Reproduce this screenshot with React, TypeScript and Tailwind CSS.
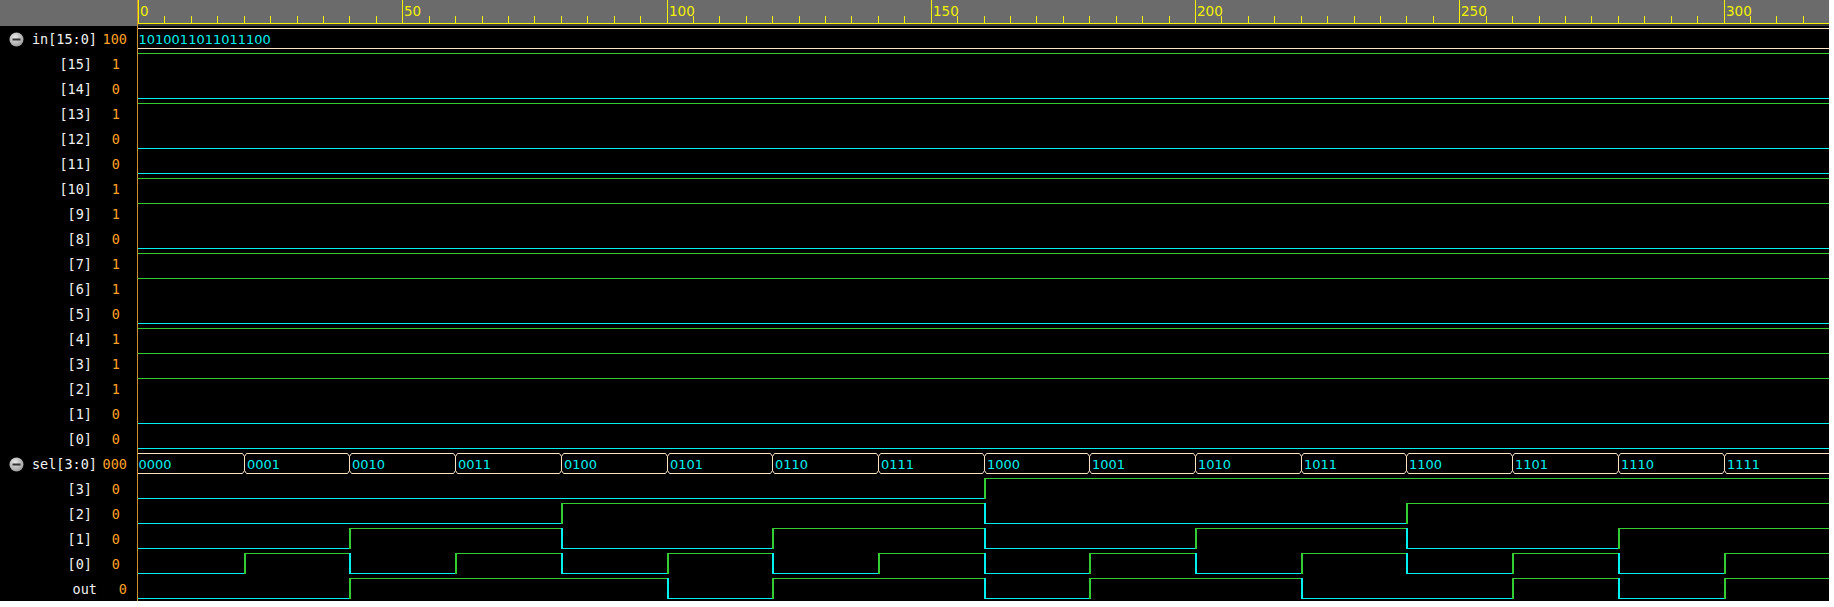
import React from "react";

const T = 5.285;
const W = 1691;
const H = 601;
const GREEN = "#33cc33";
const CYAN = "#00f0f0";
const BUS = "#ffe4c4";
const YELLOW = "#f2f200";
const inBits = "1010011011011100";

type Row = { label: string; value: string; top?: boolean; icon?: boolean };

const rows: Row[] = [
  { label: "in[15:0]", value: "100", top: true, icon: true },
  ...Array.from({ length: 16 }, (_, i) => ({ label: `[${15 - i}]`, value: inBits[i] })),
  { label: "sel[3:0]", value: "000", top: true, icon: true },
  ...[3, 2, 1, 0].map((b) => ({ label: `[${b}]`, value: "0" })),
  { label: "out", value: "0", top: true },
];

const xr = (t: number) => t * T + 1;

const MinusIcon = () => (
  <svg width="15" height="15" viewBox="0 0 15 15" className="shrink-0">
    <defs>
      <radialGradient id="g" cx="40%" cy="35%" r="70%">
        <stop offset="0%" stopColor="#e8e8e8" />
        <stop offset="100%" stopColor="#9a9a9a" />
      </radialGradient>
    </defs>
    <circle cx="7.5" cy="7.5" r="7" fill="url(#g)" />
    <rect x="3.5" y="6.5" width="8" height="2" fill="#333" />
  </svg>
);

const digital = (k: number, levels: number[]) => {
  const hi = 28 + 25 * k + 0.5;
  const lo = 48 + 25 * k + 0.5;
  const out: React.ReactNode[] = [];
  levels.forEach((lv, i) => {
    const x0 = i === 0 ? 0 : xr(20 * i);
    const x1 = i === levels.length - 1 ? W : xr(20 * (i + 1));
    out.push(
      <line key={`h${k}-${i}`} x1={x0} x2={x1} y1={lv ? hi : lo} y2={lv ? hi : lo} stroke={lv ? GREEN : CYAN} strokeWidth={1} />
    );
    if (i > 0 && levels[i - 1] !== lv) {
      out.push(
        <line key={`v${k}-${i}`} x1={x0} x2={x0} y1={hi - 0.5} y2={lo + 0.5} stroke={lv ? GREEN : CYAN} strokeWidth={2} />
      );
    }
  });
  return out;
};

const bus = (k: number, values: string[]) => {
  const top = 28 + 25 * k + 0.5;
  const bot = 48 + 25 * k + 0.5;
  return values.map((v, i) => {
    const x0 = i === 0 ? 0 : Math.round(20 * i * T) + 0.5;
    const x1 = i === values.length - 1 ? W : Math.round(20 * (i + 1) * T) + 0.5;
    const l = i === 0 ? `M${x0},${top} ` : `M${x0 + 2},${top} `;
    const d =
      l +
      (i === values.length - 1
        ? `L${x1},${top} M${x1},${bot} `
        : `L${x1 - 2},${top} L${x1},${top + 3} L${x1},${bot - 3} L${x1 - 2},${bot} `) +
      (i === 0 ? `L${x0},${bot}` : `L${x0 + 2},${bot} L${x0},${bot - 3} L${x0},${top + 3} L${x0 + 2},${top}`);
    return (
      <g key={`b${k}-${i}`}>
        <path d={d} fill="none" stroke={BUS} strokeWidth={1} />
        <text x={i === 0 ? x0 + 0.5 : x0 + 2.5} y={top + 15} fill={CYAN} fontSize="13" fontFamily="'DejaVu Sans', sans-serif">
          {v}
        </text>
      </g>
    );
  });
};

const Waves = () => {
  const ticks: React.ReactNode[] = [];
  for (let t = 0; t <= 320; t += 5) {
    const x = Math.round(t * T) + 0.5;
    const major = t % 50 === 0;
    ticks.push(<line key={`t${t}`} x1={x} x2={x} y1={major ? 0 : 16} y2={23} stroke={YELLOW} strokeWidth={1} />);
    if (major)
      ticks.push(
        <text key={`l${t}`} x={x + 1.5} y={15.5} fill={YELLOW} fontSize="13.5" fontFamily="'DejaVu Sans', sans-serif">
          {t}
        </text>
      );
  }

  const selVals = Array.from({ length: 16 }, (_, i) => i.toString(2).padStart(4, "0"));
  const steps = Array.from({ length: 16 }, (_, i) => i);

  return (
    <svg width={W} height={H} className="block" shapeRendering="crispEdges">
      <rect x={0} y={0} width={W} height={23} fill="#6b6b6b" />
      <rect x={0} y={24} width={W} height={2} fill="#3a3a3a" />
      <line x1={0} x2={W} y1={23.5} y2={23.5} stroke={YELLOW} />
      <g shapeRendering="auto">{ticks}</g>
      {bus(0, [inBits])}
      {Array.from({ length: 16 }, (_, i) => digital(i + 1, [Number(inBits[i])]))}
      <g shapeRendering="auto">{bus(17, selVals)}</g>
      {[3, 2, 1, 0].map((b, j) => digital(18 + j, steps.map((s) => (s >> b) & 1)))}
      {digital(22, steps.map((s) => Number(inBits[15 - s])))}
    </svg>
  );
};

export default function App() {
  return (
    <div className="w-[1834px] h-[607px] bg-white overflow-hidden">
      <div className="flex w-[1829px] h-[601px] bg-black overflow-hidden">
        <div className="w-[138px] shrink-0 border-r border-[#cf922f] flex flex-col font-['DejaVu_Sans_Mono',monospace] text-[13.5px]">
          <div className="h-[26px] shrink-0 bg-[#6b6b6b]" />
          {rows.map((r, i) => (
            <div key={i} className="h-[25px] shrink-0 flex items-center pt-[2px]">
              <div className={`w-[97px] flex items-center ${r.top ? "" : "pr-[5px]"}`}>
                {r.icon ? (
                  <span className="ml-[9px]">
                    <MinusIcon />
                  </span>
                ) : null}
                <span className="flex-1 text-right text-[#f2f2f2] whitespace-pre">{r.label}</span>
              </div>
              <div className={`w-[30px] text-right text-[#ffa126] ${r.top ? "" : "pr-[7px]"}`}>{r.value}</div>
            </div>
          ))}
        </div>
        <Waves />
      </div>
    </div>
  );
}
